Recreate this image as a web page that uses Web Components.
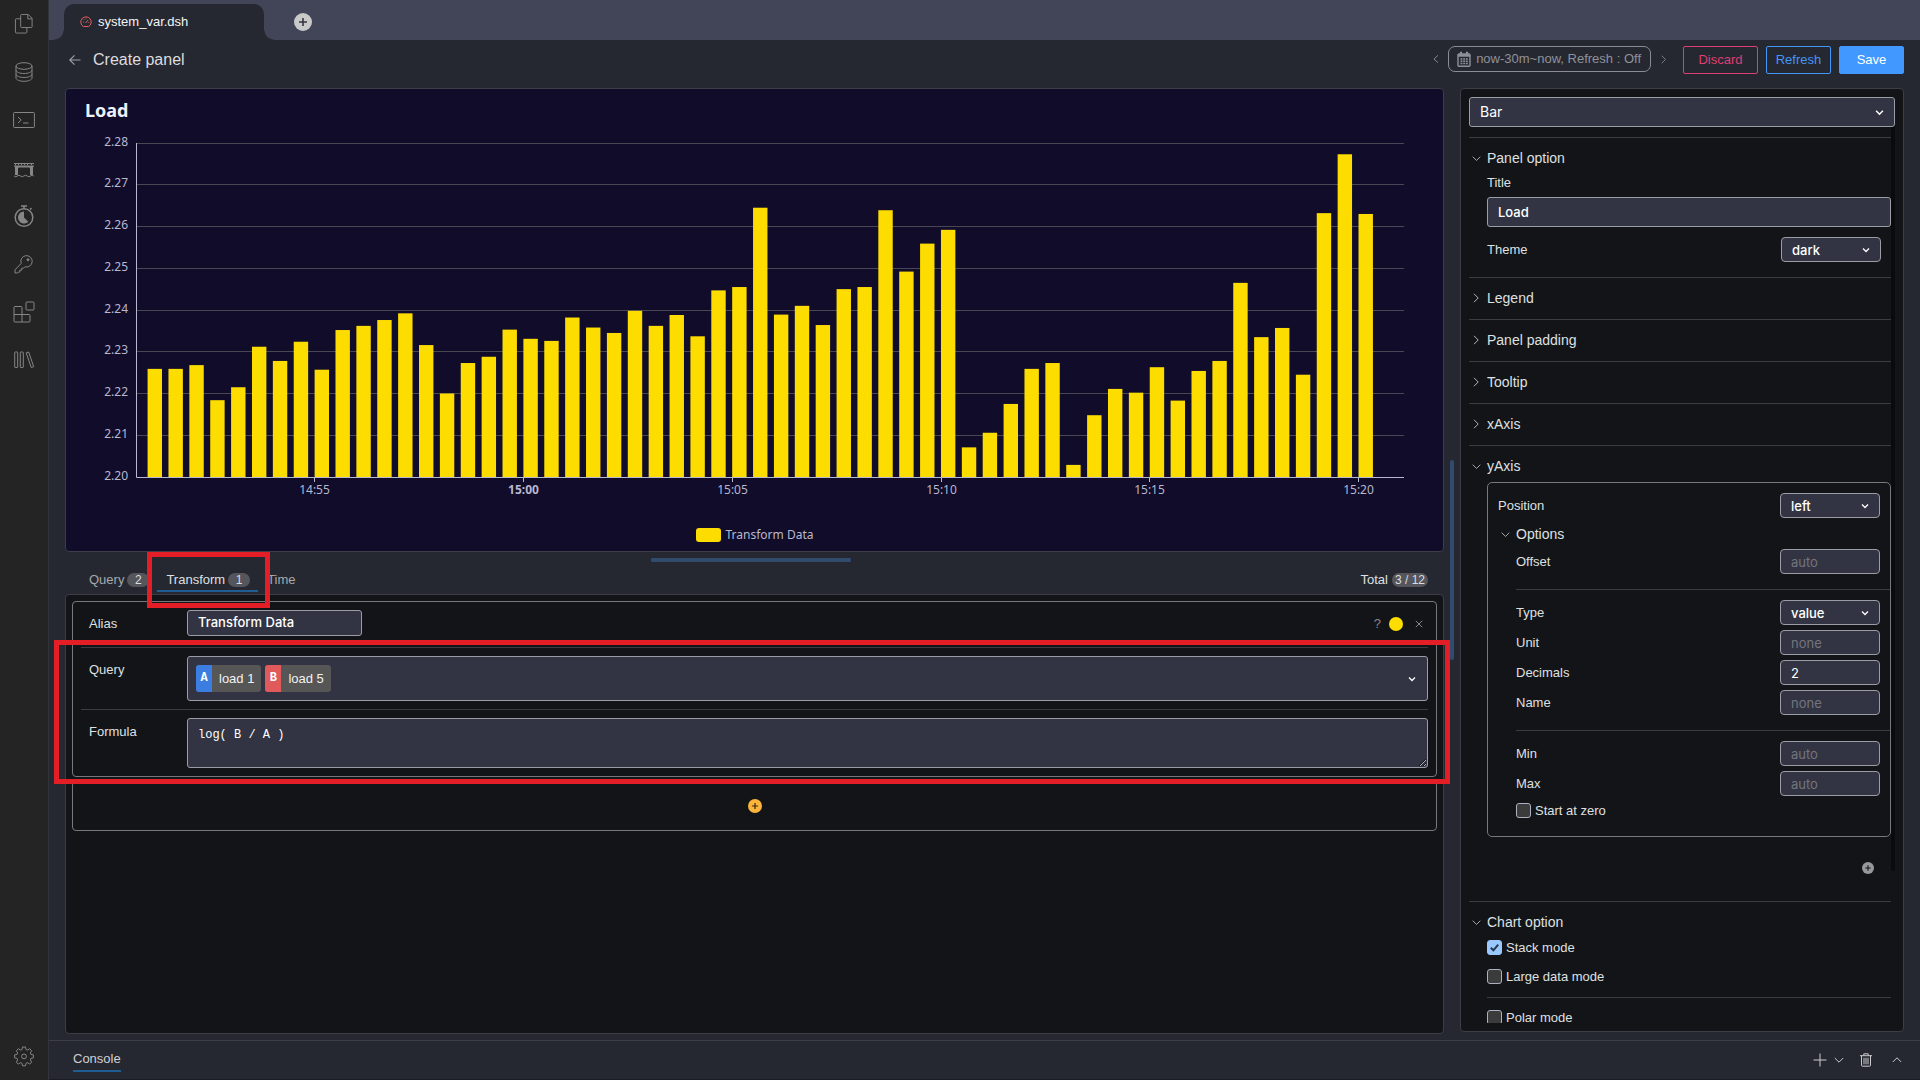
<!DOCTYPE html>
<html lang="en">
<head>
<meta charset="utf-8">
<title>system_var.dsh</title>
<style>
  html, body { margin: 0; height: 100%; }
  body {
    background: #262831;
    color: #dfe0e2;
    font: 13px/18px "Liberation Sans", Arial, sans-serif;
    --control-font: Inter, "Liberation Sans", sans-serif;
    --page: #262831;
    --bar: #424558;
    --surface: #131417;
    --field: #323443;
    --field-line: #9a9ca6;
    --line: #3b3d42;
    --panel-line: #3c3d46;
    --card-line: #77787c;
    --accent: #1f5d93;
    --grip: #304b6e;
    --mark: #e31e26;
  }
</style>
</head>
<body>
<app-shell>
  <side-rail slot="rail"></side-rail>
  <tab-strip slot="tabs" file="system_var.dsh"></tab-strip>
  <panel-header slot="header" heading="Create panel" range="now-30m~now, Refresh : Off"></panel-header>
  <bar-chart slot="chart" heading="Load" series="Transform Data"></bar-chart>
  <query-tabs slot="query-tabs"></query-tabs>
  <transform-editor slot="editor"></transform-editor>
  <option-panel slot="options"></option-panel>
  <console-bar slot="console"></console-bar>
</app-shell>

<script>
const ICONS = {
  files: [20, '<path d="M7.5 1.5h7l4 4v8.7a1 1 0 0 1-1 1h-10a1 1 0 0 1-1-1V2.5a1 1 0 0 1 1-1zM14 1.5v4.6h4.5M6.5 6H2a1 1 0 0 0-1 1v13a1 1 0 0 0 1 1h10a1 1 0 0 0 1-1v-4.8"/>', 20, '0 1 20 21'],
  database: [20, '<ellipse cx="10" cy="4" rx="8" ry="3.3"/><path d="M2 4v12c0 1.8 3.600 3.300 8 3.300s8-1.500 8-3.300V4M2 8.200c0 1.800 3.600 3.300 8 3.300s8-1.500 8-3.300M2 12.200c0 1.800 3.600 3.300 8 3.300s8-1.500 8-3.300"/>', 20],
  terminal: [22, '<rect x=".6" y="3.500" width="20.800" height="15" rx=".8"/><path d="M5 8l3.200 3L5 14M10 14h5.500"/>', 22],
  bridge: [20, '<g fill="currentColor" stroke="none"><path d="M0 5h20v1H0zM1 6h1v1H1zm3 0h1v1H4zm3 0h1v1H7zm3 0h1v1h-1zm3 0h1v1h-1zm4 0h1v1h-1zM0 7.500h20v1.200h-1V17h-3v-6.500q0-1-1-1H5q-1 0-1 1V17H1V8.700H0z"/></g><path d="M0 18q1.700 1.500 3.300 0t3.300 0 3.300 0 3.300 0 3.300 0 3.300 0"/>', 20],
  timer: [22, '<circle cx="11" cy="12.500" r="8.800" stroke-width="1.500"/><path d="M8 1h6M11 1v3M17 4.500l1.500-1.500" stroke-width="1.500"/><path d="M11 6.500v6l4.300 4.200A6 6 0 1 1 11 6.500z" fill="currentColor" stroke="none"/>', 22],
  key: [20, '<path d="M7.200 9.400A5.700 5.700 0 1 1 10.900 12.800L9.500 14.200H7.700v2H5.800v1.900H4.400L3.500 19H1v-3.200z"/><circle cx="14" cy="5.800" r="1" fill="currentColor"/>', 20],
  blocks: [22, '<rect x="13" y="1" width="8" height="8" rx="1"/><path d="M9 13.500V6.500a1 1 0 0 0-1-1H2a1 1 0 0 0-1 1v13.500a1 1 0 0 0 1 1h14a1 1 0 0 0 1-1v-5.500a1 1 0 0 0-1-1H1M9 13.500V21"/>', 22],
  library: [20, '<rect x=".7" y="2" width="3" height="15.500" rx=".5"/><rect x="6.300" y="2" width="3" height="15.500" rx=".5"/><path d="M12.200 2.800l2.500-.8 5 14.700-2.500.8z"/>', 20],
  gear: [20, '<path d="M8.500 1h3l.5 2.500 1.500.6 2.200-1.400 2 2-1.400 2.200.6 1.500 2.500.5v3l-2.500.5-.6 1.500 1.400 2.200-2 2-2.200-1.400-1.500.6-.5 2.500h-3L8 17.300l-1.500-.6-2.200 1.400-2-2 1.400-2.200-.6-1.500L.6 11.900v-3l2.500-.5.6-1.500-1.400-2.200 2-2 2.200 1.400L8 3.500z"/><circle cx="10" cy="10.400" r="2.400"/>', 20],
  gauge: [12, '<path d="M3.300 10.500A5.200 5.200 0 1 1 8.700 10.500z"/><path d="M5.700 7l2.400-2.900M3 6h.8M4 3.500l.6.600M8.500 6.500h.8M6 2.500v.700"/>', 12],
  plusDisc: [18, '<circle cx="9" cy="9" r="9" fill="currentColor" stroke="none"/><path d="M9 5v8M5 9h8" stroke="var(--cross, #33353f)" stroke-width="1.600"/>', 18],
  back: [12, '<path d="M11.500 6H1M5.500 1.300L.8 6l4.700 4.700" stroke-width="1.200"/>', 12],
  left: [10, '<path d="M7 1.300L3 5l4 3.700"/>', 10],
  right: [10, '<path d="M3 .8L7.200 5 3 9.200"/>', 10],
  down: [10, '<path d="M.8 3L5 7.200 9.200 3"/>', 10],
  up: [10, '<path d="M.8 7L5 2.800 9.200 7"/>', 10],
  caret: [8, '<path d="M1 2.500l3 3 3-3" stroke-width="1.300"/>', 8],
  calendar: [16, '<rect x="2" y="3" width="12" height="12.200" rx="1" stroke-width="1.400"/><path d="M2 4.500h12" stroke-width="2.500"/><path d="M5 .8v3M11 .8v3" stroke-width="2"/><path d="M4.500 8h7.500M4.500 10.300h7.500M4.500 12.600h7.500" stroke-width="1.500" stroke-dasharray="1.900 .8"/>', 16],
  plus: [14, '<path d="M7 .5v13M.5 7h13"/>', 14],
  trash: [14, '<path d="M1 2.700h12M4.800 2.700V.8h4.400v1.900M2.500 2.700v9.500a1 1 0 0 0 1 1h7a1 1 0 0 0 1-1V2.700M5 4.800v6.500M7 4.800v6.500M9 4.800v6.500"/>', 14],
  close: [8, '<path d="M.8.8l6.400 6.400M7.200.8L.8 7.200"/>', 8],
  check: [11, '<path d="M1.800 5.800l2.600 2.500 4.800-5.600" stroke-width="2"/>', 11]
};
const icon = (name, size) => {
  const [w, body, box, view] = ICONS[name];
  const s = size || w;
  return `<svg width="${s}" height="${s}" viewBox="${view || `0 0 ${box} ${box}`}" overflow="visible" fill="none" stroke="currentColor" stroke-width="1" aria-hidden="true">${body}</svg>`;
};

const RESET = `
  *, *::before, *::after { box-sizing: border-box; }
  :host { display: block; box-sizing: border-box; }
  svg { display: block; flex: none; }
  button { margin: 0; padding: 0; border: 0; background: none; color: inherit; font: inherit; cursor: pointer; }
  input, select, textarea { margin: 0; font: inherit; font-family: var(--control-font); }
`;
class Base extends HTMLElement {
  connectedCallback() {
    if (this.shadowRoot) return;
    this.attachShadow({ mode: 'open' }).innerHTML = `<style>${RESET}${this.styles()}</style>${this.markup()}`;
    this.ready();
  }
  styles() { return ''; }
  markup() { return '<slot></slot>'; }
  ready() {}
}

customElements.define('app-shell', class extends Base {
  styles() { return `
    :host { display: flex; height: 100vh; overflow: hidden; }
    .main { flex: 1; min-width: 0; display: flex; flex-direction: column; }
    .body { flex: 1; min-height: 0; padding: 0 16px; display: grid; grid-template-columns: minmax(0, 1fr) 16px 444px; }
    .left { display: grid; grid-template-rows: 58fr 42px 55fr; padding-bottom: 6px; min-height: 0; }
    .grip { display: flex; align-items: center; justify-content: center; padding-bottom: 8px; }
    .grip i { width: 4px; height: 200px; border-radius: 2px; background: var(--grip); }
    .right { padding-bottom: 8px; min-height: 0; display: grid; }
  `; }
  markup() { return `
    <slot name="rail"></slot>
    <div class="main">
      <slot name="tabs"></slot>
      <slot name="header"></slot>
      <div class="body">
        <div class="left"><slot name="chart"></slot><slot name="query-tabs"></slot><slot name="editor"></slot></div>
        <div class="grip"><i></i></div>
        <div class="right"><slot name="options"></slot></div>
      </div>
      <slot name="console"></slot>
    </div>`; }
});

customElements.define('side-rail', class extends Base {
  styles() { return `
    :host { width: 49px; background: #242424; border-right: 1px solid #33343a; color: #868686; }
    nav { height: 100%; display: flex; flex-direction: column; }
    button { width: 48px; height: 48px; display: grid; place-items: center; }
    .last { margin-top: auto; }
  `; }
  markup() {
    const items = [['files', 'Files'], ['database', 'Database'], ['terminal', 'Shell'], ['bridge', 'Bridge'], ['timer', 'Timer'], ['key', 'Keys'], ['blocks', 'Extensions'], ['library', 'Library']];
    return `<nav>${items.map(([n, l]) => `<button aria-label="${l}">${icon(n)}</button>`).join('')}
      <button class="last" aria-label="Settings">${icon('gear')}</button></nav>`;
  }
});

customElements.define('tab-strip', class extends Base {
  styles() { return `
    :host { height: 40px; flex: none; background: var(--bar); display: flex; align-items: flex-end; padding: 0 5px; }
    .curve { width: 10px; height: 10px; }
    .curve.l { background: radial-gradient(circle at 0 0, transparent 9px, var(--page) 10px); }
    .curve.r { background: radial-gradient(circle at 100% 0, transparent 9px, var(--page) 10px); }
    .tab { width: 200px; height: 36px; padding: 0 16px; display: flex; align-items: center; gap: 6px; background: var(--page); border-radius: 10px 10px 0 0; color: #f4f4f4; }
    .tab svg { color: #e0605f; }
    .add { margin-left: 20px; align-self: flex-start; padding-top: 13px; color: #c9c9c9; }
  `; }
  markup() { return `
    <span class="curve l"></span>
    <button class="tab">${icon('gauge')}<span>${this.getAttribute('file')}</span></button>
    <span class="curve r"></span>
    <button class="add" aria-label="New tab">${icon('plusDisc')}</button>`; }
});

customElements.define('panel-header', class extends Base {
  styles() { return `
    :host { height: 48px; flex: none; padding: 6px 16px 0 20px; display: flex; align-items: flex-start; }
    .title { height: 28px; display: flex; align-items: center; gap: 12px; font-size: 16px; color: #dcdcde; margin-right: auto; }
    .title button { color: #9b9da3; }
    .step { height: 26px; width: 24px; display: grid; place-items: center; color: #85878e; }
    .range { height: 26px; padding: 0 9px 0 7px; display: flex; align-items: center; gap: 4px; border: 1px solid #8a8c93; border-radius: 7px; color: #8f9198; }
    .act { height: 28px; margin-left: 8px; border: 1px solid; border-radius: 2px; min-width: 65px; }
    .discard { min-width: 75px; color: #dc3f73; }
    .refresh { color: #4396f7; }
    .save { background: #4199ff; border-color: #4199ff; color: #fff; }
  `; }
  markup() { return `
    <div class="title"><button aria-label="Back">${icon('back')}</button><span>${this.getAttribute('heading')}</span></div>
    <button class="step" aria-label="Earlier">${icon('left')}</button>
    <button class="range">${icon('calendar')}<span>${this.getAttribute('range')}</span></button>
    <button class="step" aria-label="Later">${icon('right', 9)}</button>
    <button class="act discard">Discard</button>
    <button class="act refresh">Refresh</button>
    <button class="act save">Save</button>`; }
});

/* Load ratio every 30 s, in ten-thousandths above 2.20 */
const SAMPLES = [259,259,268,184,215,312,278,324,257,352,362,376,392,316,200,273,288,353,331,326,382,358,345,398,
  362,388,337,447,455,645,389,410,364,450,455,639,492,559,592,71,106,175,259,273,29,148,211,202,263,183,254,278,465,335,357,245,632,773,630];
const SPAN = 1822, FIRST = 27, STEP = 30;
const TICKS = [[257, '14:55'], [557, '15:00', true], [857, '15:05'], [1157, '15:10'], [1457, '15:15'], [1757, '15:20']];

customElements.define('bar-chart', class extends Base {
  styles() { return `
    :host { display: flex; flex-direction: column; min-height: 0; background: #100c2a; border: 1px solid var(--panel-line); border-radius: 4px; font-family: "Noto Sans", "Open Sans", sans-serif; color: #b9b8ce; }
    h2 { margin: 0; padding: 9px 0 0 19px; font-size: 18px; line-height: 24px; font-weight: 700; color: #eef1fa; }
    .plot { flex: 1; min-height: 0; }
    .plot svg { width: 100%; height: 100%; }
    text { font-size: 12px; fill: #b9b8ce; }
    .legend { display: flex; justify-content: center; align-items: center; gap: 5px; height: 30px; font-size: 12px; }
    .legend i { width: 25px; height: 14px; border-radius: 3px; background: #fddd00; }
    .foot { height: 1px; }
  `; }
  markup() { return `
    <h2>${this.getAttribute('heading')}</h2>
    <div class="plot"></div>
    <div class="legend"><i></i><span>${this.getAttribute('series')}</span></div>
    <div class="foot"></div>`; }
  ready() {
    this.plot = this.shadowRoot.querySelector('.plot');
    this.draw();
    new ResizeObserver(() => this.draw()).observe(this.plot);
  }
  draw() {
    const W = this.plot.clientWidth, H = this.plot.clientHeight;
    if (!W || (W === this.w && H === this.h)) return;
    this.w = W; this.h = H;
    const L = 70, R = W - 39, T = 21, B = H - 43, pw = R - L, ph = B - T;
    const X = t => L + pw * t / SPAN, Y = v => B - ph * v / 800;
    const crisp = n => Math.floor(n) + 0.5;
    let s = '';
    for (let k = 0; k <= 8; k++) {
      const y = crisp(Y(k * 100));
      if (k) s += `<path d="M${L} ${y}H${R}" stroke="#484753"/>`;
      s += `<text x="${L - 8}" y="${y + 2}" text-anchor="end">${(2.2 + k / 100).toFixed(2)}</text>`;
    }
    const bw = pw * STEP / SPAN * 0.69;
    SAMPLES.forEach((v, i) => {
      const y = Y(v);
      s += `<rect x="${X(FIRST + i * STEP) - bw / 2}" y="${y}" width="${bw}" height="${B - y}" fill="#fddd00"/>`;
    });
    s += `<path d="M${L + .5} ${T}V${crisp(B)}H${R}" fill="none" stroke="#b9b8ce"/>`;
    for (const [t, label, strong] of TICKS) {
      const x = crisp(X(t));
      s += `<path d="M${x} ${B}v5" stroke="#b9b8ce"/><text x="${x}" y="${B + 17}" text-anchor="middle"${strong ? ' font-weight="700"' : ''}>${label}</text>`;
    }
    this.plot.innerHTML = `<svg role="img" aria-label="Load by time">${s}</svg>`;
  }
});

customElements.define('count-badge', class extends Base {
  styles() { return `
    :host { display: inline-block; min-width: 22px; padding: 0 7px; height: 14px; border-radius: 7px; background: #54565c; color: #dcdde0; font-size: 12px; line-height: 14px; text-align: center; }
    :host([tight]) { padding: 0 3px; }
  `; }
});

customElements.define('query-tabs', class extends Base {
  styles() { return `
    .grip { display: flex; justify-content: center; padding: 6px 7px 0 0; }
    .grip i { width: 200px; height: 4px; border-radius: 1px; background: var(--grip); }
    .row { height: 32px; padding: 0 16px 0 15px; display: flex; align-items: flex-start; }
    .tab { position: relative; height: 30px; padding: 8px 8px 0 9px; display: flex; align-items: center; gap: 3px; border-bottom: 2px solid transparent; color: #a7a9ad; }
    .tab.on { border-color: var(--accent); color: #dfe0e2; }
    .mark { position: absolute; z-index: 3; inset: -10px -12px -18px -10px; border: 5px solid var(--mark); }
    .total { margin-left: auto; padding-top: 9px; display: flex; align-items: center; gap: 4px; }
  `; }
  markup() { return `
    <div class="grip"><i></i></div>
    <div class="row">
      <button class="tab">Query <count-badge>2</count-badge></button>
      <button class="tab on">Transform <count-badge>1</count-badge><span class="mark"></span></button>
      <button class="tab">Time</button>
      <div class="total">Total <count-badge tight>3 / 12</count-badge></div>
    </div>`; }
});

customElements.define('query-chip', class extends Base {
  styles() { return `
    :host { display: flex; height: 27px; line-height: 27px; border-radius: 3px; overflow: hidden; background: #565656; color: #f2f2f2; }
    b { width: 16px; text-align: center; background: var(--chip, #3b7de0); font: 700 12px/27px "Liberation Mono", monospace; color: #fff; }
    span { padding: 0 7px; }
  `; }
  markup() { return `<b>${this.getAttribute('key')}</b><span><slot></slot></span>`; }
});

customElements.define('transform-editor', class extends Base {
  styles() { return `
    :host { min-height: 0; padding: 6px; background: var(--surface); border: 1px solid var(--panel-line); border-radius: 4px; display: flex; flex-direction: column; gap: 4px; }
    .card { border: 1px solid var(--card-line); border-radius: 4px; padding: 0 8px; }
    .row { display: flex; padding: 8px 0; }
    .row + .row { border-top: 1px solid var(--line); }
    .row > label, .row > .label { flex: none; width: 106px; padding: 5px 0 0 8px; }
    .alias { padding-bottom: 11px; }
    .marked { position: relative; border-top: 1px solid var(--line); }
    .mark { position: absolute; z-index: 2; inset: -8px -22px -8px -27px; border: 5px solid var(--mark); pointer-events: none; }
    input, textarea, .pick { border: 1px solid var(--field-line); border-radius: 3px; background: var(--field); color: #fff; }
    input { width: 175px; height: 26px; padding: 0 10px 2px; font-weight: 500; }
    .tools { margin-left: auto; display: flex; align-items: center; gap: 8px; height: 28px; margin-bottom: -2px; padding-right: 5px; color: #85878c; }
    .dot { width: 14px; height: 14px; border-radius: 50%; background: #fddd00; }
    .x { margin-left: 4px; }
    .pick { flex: 1; height: 45px; padding: 0 11px 0 8px; display: flex; align-items: center; gap: 4px; text-align: left; }
    .pick > svg { margin-left: auto; }
    textarea { display: block; flex: 1; height: 50px; padding: 7px 10px; font: 12px/18px "Liberation Mono", monospace; resize: vertical; }
    .more { height: 50px; display: grid; place-items: center; color: #fcb43a; --cross: #3a2a10; }
    .more button { display: block; }
    query-chip[key=B] { --chip: #e05a5c; }
  `; }
  markup() { return `
    <div class="card">
      <div class="row alias">
        <label for="alias">Alias</label><input id="alias" value="Transform Data">
        <div class="tools"><button aria-label="Help">?</button><button class="dot" aria-label="Colour"></button><button class="x" aria-label="Remove">${icon('close')}</button></div>
      </div>
      <div class="marked">
        <div class="row">
          <span class="label" id="ql">Query</span>
          <button class="pick" aria-labelledby="ql"><query-chip key="A">load 1</query-chip><query-chip key="B">load 5</query-chip>${icon('caret')}</button>
        </div>
        <div class="row">
          <label for="formula">Formula</label><textarea id="formula">log( B / A )</textarea>
        </div>
        <span class="mark"></span>
      </div>
    </div>
    <div class="card more"><button aria-label="Add transform">${icon('plusDisc', 14)}</button></div>`; }
});

customElements.define('drop-down', class extends Base {
  styles() { return `
    :host { display: grid; }
    select, svg { grid-area: 1 / 1; }
    select { appearance: none; width: 100%; height: 25px; padding: 0 10px; border: 1px solid var(--field-line); border-radius: 4px; background: var(--field); color: #fff; }
    svg { justify-self: end; align-self: center; margin-right: 11px; pointer-events: none; color: #fff; }
    :host([large]) select { height: 30px; padding: 0 10px; font-size: 14px; border-radius: 3px; }
  `; }
  markup() { return `<select aria-label="${this.getAttribute('name')}"><option>${this.getAttribute('value')}</option></select>${icon('caret', this.hasAttribute('large') ? 9 : 8)}`; }
});

customElements.define('field-row', class extends Base {
  styles() { return `
    :host { display: flex; align-items: center; justify-content: space-between; height: 25px; padding-right: 10px; }
    .box { width: 100px; display: grid; }
    input, select, svg { grid-area: 1 / 1; }
    input, select { appearance: none; width: 100%; height: 25px; padding: 0 10px; border: 1px solid var(--field-line); border-radius: 4px; background: var(--field); color: #fff; }
    select { font-weight: 500; }
    input::placeholder { color: #74757c; opacity: 1; }
    svg { justify-self: end; align-self: center; margin-right: 11px; pointer-events: none; color: #fff; }
  `; }
  markup() {
    const v = this.getAttribute('value') || '';
    const c = this.hasAttribute('choice')
      ? `<select id="f"><option>${v}</option></select>${icon('caret')}`
      : `<input id="f" value="${v}" placeholder="${this.getAttribute('hint') || ''}">`;
    return `<label for="f">${this.getAttribute('label')}</label><span class="box">${c}</span>`;
  }
});

customElements.define('tick-row', class extends Base {
  styles() { return `
    :host { height: 19px; display: flex; align-items: center; gap: 4px; }
    .box { display: grid; place-items: center; }
    input, svg { grid-area: 1 / 1; }
    input { appearance: none; width: 15px; height: 15px; border: 1px solid #aeafc0; border-radius: 3px; background: #3b3b3b; }
    input:checked { background: #99c8ff; border-color: #99c8ff; }
    svg { pointer-events: none; color: #26364d; }
    input:not(:checked) + svg { display: none; }
  `; }
  markup() { return `<span class="box"><input id="t" type="checkbox"${this.hasAttribute('on') ? ' checked' : ''}>${icon('check')}</span><label for="t">${this.getAttribute('label')}</label>`; }
});

customElements.define('fold-section', class extends Base {
  styles() { return `
    :host { border-top: 1px solid var(--line); padding: 10px 0 11px; }
    :host([open]) { padding-bottom: 0; }
    :host([nested]) { border: 0; padding: 0; }
    button { display: flex; align-items: center; gap: 4px; width: 100%; height: 20px; font-size: 14px; text-align: left; }
    .tw { width: 14px; display: grid; justify-items: center; color: #b4b5b9; }
    .in { padding: 6px 0 0 18px; }
    :host([nested]) .in { padding-top: 5px; }
    :host(:not([open])) .in { display: none; }
  `; }
  markup() {
    const open = this.hasAttribute('open');
    return `<button aria-expanded="${open}"><span class="tw">${icon(open ? 'down' : 'right', open ? 9 : 10)}</span>${this.getAttribute('heading')}</button><div class="in"><slot></slot></div>`;
  }
});

customElements.define('option-panel', class extends Base {
  styles() { return `
    :host { min-height: 0; padding: 8px; background: var(--surface); border: 1px solid var(--panel-line); border-radius: 4px; display: flex; flex-direction: column; }
    .scroll { flex: 1; min-height: 0; display: flex; }
    .list { flex: 1; min-width: 0; overflow-y: auto; scrollbar-width: none; padding-top: 10px; }
    .thumb { width: 4px; height: 83%; background: #0a0b0d; }
    .title { display: flex; flex-direction: column; gap: 5px; margin-bottom: 10px; }
    .title input { height: 30px; padding: 0 10px; border: 1px solid var(--field-line); border-radius: 3px; background: var(--field); color: #fff; font-weight: 500; }
    .pad { margin-bottom: 15px; }
    .axis { border: 1px solid var(--card-line); border-radius: 5px; padding: 10px 0 16px 10px; }
    .axis fold-section { margin-top: 6px; }
    .group { display: flex; flex-direction: column; gap: 5px; }
    .rule { height: 1px; background: var(--line); margin: 15px 0 10px; }
    .rule.close { margin: 11px 0 10px; }
    .add { display: flex; justify-content: flex-end; padding: 25px 17px 27px 0; color: #97989b; --cross: #131417; }
    .ticks { display: flex; flex-direction: column; gap: 10px; }
  `; }
  markup() { return `
    <drop-down large name="Chart type" value="Bar"></drop-down>
    <div class="scroll">
      <div class="list">
        <fold-section open heading="Panel option">
          <div class="title"><label for="title">Title</label><input id="title" value="Load"></div>
          <field-row class="pad" choice label="Theme" value="dark"></field-row>
        </fold-section>
        <fold-section heading="Legend"></fold-section>
        <fold-section heading="Panel padding"></fold-section>
        <fold-section heading="Tooltip"></fold-section>
        <fold-section heading="xAxis"></fold-section>
        <fold-section open heading="yAxis">
          <div class="axis">
            <field-row choice label="Position" value="left"></field-row>
            <fold-section nested open heading="Options">
              <field-row label="Offset" hint="auto"></field-row>
              <div class="rule"></div>
              <div class="group">
                <field-row choice label="Type" value="value"></field-row>
                <field-row label="Unit" hint="none"></field-row>
                <field-row label="Decimals" value="2"></field-row>
                <field-row label="Name" hint="none"></field-row>
              </div>
              <div class="rule"></div>
              <div class="group">
                <field-row label="Min" hint="auto"></field-row>
                <field-row label="Max" hint="auto"></field-row>
                <tick-row label="Start at zero"></tick-row>
              </div>
            </fold-section>
          </div>
          <div class="add"><button aria-label="Add axis">${icon('plusDisc', 12)}</button></div>
        </fold-section>
        <fold-section open heading="Chart option">
          <div class="ticks"><tick-row on label="Stack mode"></tick-row><tick-row label="Large data mode"></tick-row></div>
          <div class="rule close"></div>
          <tick-row label="Polar mode"></tick-row>
        </fold-section>
      </div>
      <div class="thumb"></div>
    </div>`; }
});

customElements.define('console-bar', class extends Base {
  styles() { return `
    :host { height: 40px; flex: none; border-top: 1px solid var(--panel-line); border-bottom: 1px solid #1b1c21; padding: 0 18px 0 24px; display: flex; align-items: center; color: #cfd0d3; }
    .name { height: 24px; border-bottom: 2px solid var(--accent); }
    .tools { margin-left: auto; display: flex; align-items: center; gap: 7px; color: #cbccd0; }
    .trash { margin: 0 12px 0 8px; }
  `; }
  markup() { return `
    <button class="name">Console</button>
    <div class="tools"><button aria-label="New console">${icon('plus')}</button><button aria-label="Console list">${icon('down')}</button>
    <button class="trash" aria-label="Clear">${icon('trash')}</button><button aria-label="Expand">${icon('up')}</button></div>`; }
});
</script>
</body>
</html>
